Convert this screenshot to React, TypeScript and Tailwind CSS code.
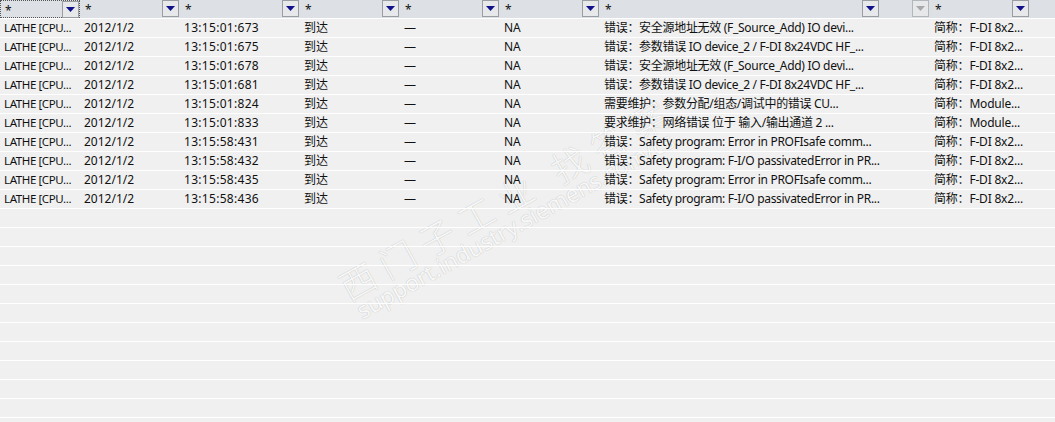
import React from "react";

const cols = [
  { w: 80, star: true, btn: "on" },
  { w: 100, star: true, btn: "on" },
  { w: 120, star: true, btn: "on" },
  { w: 100, star: true, btn: "on" },
  { w: 100, star: true, btn: "on" },
  { w: 100, star: true, btn: "on" },
  { w: 280, star: true, btn: "on" },
  { w: 50, star: false, btn: "off" },
  { w: 100, star: true, btn: "on" },
];

type Row = [string, string, string, string, string, string, string, string];

const rows: Row[] = [
  ["LATHE [CPU...", "2012/1/2", "13:15:01:673", "到达", "—", "NA", "错误：安全源地址无效 (F_Source_Add) IO devi...", "简称：F-DI 8x2..."],
  ["LATHE [CPU...", "2012/1/2", "13:15:01:675", "到达", "—", "NA", "错误：参数错误 IO device_2 / F-DI 8x24VDC HF_...", "简称：F-DI 8x2..."],
  ["LATHE [CPU...", "2012/1/2", "13:15:01:678", "到达", "—", "NA", "错误：安全源地址无效 (F_Source_Add) IO devi...", "简称：F-DI 8x2..."],
  ["LATHE [CPU...", "2012/1/2", "13:15:01:681", "到达", "—", "NA", "错误：参数错误 IO device_2 / F-DI 8x24VDC HF_...", "简称：F-DI 8x2..."],
  ["LATHE [CPU...", "2012/1/2", "13:15:01:824", "到达", "—", "NA", "需要维护：参数分配/组态/调试中的错误  CU...", "简称：Module..."],
  ["LATHE [CPU...", "2012/1/2", "13:15:01:833", "到达", "—", "NA", "要求维护：网络错误 位于 输入/输出通道 2 ...", "简称：Module..."],
  ["LATHE [CPU...", "2012/1/2", "13:15:58:431", "到达", "—", "NA", "错误：Safety program: Error in PROFIsafe comm...", "简称：F-DI 8x2..."],
  ["LATHE [CPU...", "2012/1/2", "13:15:58:432", "到达", "—", "NA", "错误：Safety program: F-I/O passivatedError in PR...", "简称：F-DI 8x2..."],
  ["LATHE [CPU...", "2012/1/2", "13:15:58:435", "到达", "—", "NA", "错误：Safety program: Error in PROFIsafe comm...", "简称：F-DI 8x2..."],
  ["LATHE [CPU...", "2012/1/2", "13:15:58:436", "到达", "—", "NA", "错误：Safety program: F-I/O passivatedError in PR...", "简称：F-DI 8x2..."],
];

function DropBtn({ on }: { on: boolean }) {
  return (
    <div
      className={
        "w-[17px] h-[17px] flex items-center justify-center border bg-[#e6e8ea] " +
        (on ? "border-[#9a9ea3]" : "border-[#b4b7ba]")
      }
    >
      <svg width="9" height="5" viewBox="0 0 9 5">
        <polygon points="0,0 9,0 4.5,5" fill={on ? "#10108a" : "#a8a8a8"} />
      </svg>
    </div>
  );
}

const font = {
  fontFamily: '"Noto Sans", "Noto Sans CJK SC", sans-serif',
};

const cellTracking = [
  "tracking-[-0.4px] text-[11.5px]",
  "",
  "tracking-[0.3px]",
  "",
  "",
  "",
  "tracking-[-0.3px]",
];

export default function App() {
  const emptyCount = 12;
  const colWidths = [80, 100, 120, 100, 100, 100, 280, 50, 100];
  return (
    <div
      className="relative w-[1055px] h-[422px] overflow-hidden bg-[#f0f0f0] text-[12px] text-[#111] leading-none"
      style={font}
    >
      {/* watermark (behind the rows) */}
      <div
        className="absolute z-0 left-[350px] bottom-[118px] origin-bottom-left -rotate-[29deg] pointer-events-none select-none whitespace-nowrap text-[#f7f7f7] text-[36px] leading-none tracking-[9px] [text-shadow:0_0_1px_rgba(0,0,0,0.28)]"
        style={{ fontFamily: '"Noto Sans CJK SC", sans-serif', fontWeight: 300 }}
      >
        西门子工业 找答案
      </div>
      <div
        className="absolute z-0 left-[364px] bottom-[100px] origin-bottom-left -rotate-[29deg] pointer-events-none select-none whitespace-nowrap text-[#f7f7f7] text-[23px] leading-none [text-shadow:0_0_1px_rgba(0,0,0,0.28)]"
        style={{ fontFamily: '"Noto Sans", sans-serif' }}
      >
        support.industry.siemens.com/cs
      </div>

      <div className="relative z-10">
        {/* header */}
        <div className="flex h-[19px] bg-[#dde0e4] border-b border-white">
          {cols.map((c, i) => (
            <div
              key={i}
              className={
                "relative flex items-start shrink-0 h-[18px] " +
                (i === 0 ? "border border-dotted border-[#555]" : "")
              }
              style={{ width: c.w }}
            >
              <span className={"pt-[4px] " + (i === 0 ? "pl-[4px]" : "pl-[5px]")}>
                {c.star ? "*" : ""}
              </span>
              <div className={"absolute top-0 " + (i === 0 ? "right-0" : "right-[1px]")}>
                <DropBtn on={c.btn === "on"} />
              </div>
            </div>
          ))}
          <div className="flex-1" />
        </div>

        {/* data rows */}
        {rows.map((r, ri) => (
          <div key={ri} className="flex h-[19px] border-b border-white">
            {[0, 1, 2, 3, 4, 5, 6].map((ci) => (
              <div
                key={ci}
                className={
                  "shrink-0 h-[18px] flex items-center pl-[4px] whitespace-nowrap overflow-hidden " +
                  cellTracking[ci]
                }
                style={{ width: colWidths[ci] }}
              >
                {r[ci]}
              </div>
            ))}
            <div className="shrink-0 w-[50px]" />
            <div className="shrink-0 w-[125px] h-[18px] flex items-center pl-[4px] whitespace-nowrap overflow-hidden tracking-[-0.2px]">
              {r[7]}
            </div>
          </div>
        ))}

        {/* empty rows */}
        {Array.from({ length: emptyCount }).map((_, i) => (
          <div key={"e" + i} className="h-[19px] border-b border-white" />
        ))}
      </div>
    </div>
  );
}
